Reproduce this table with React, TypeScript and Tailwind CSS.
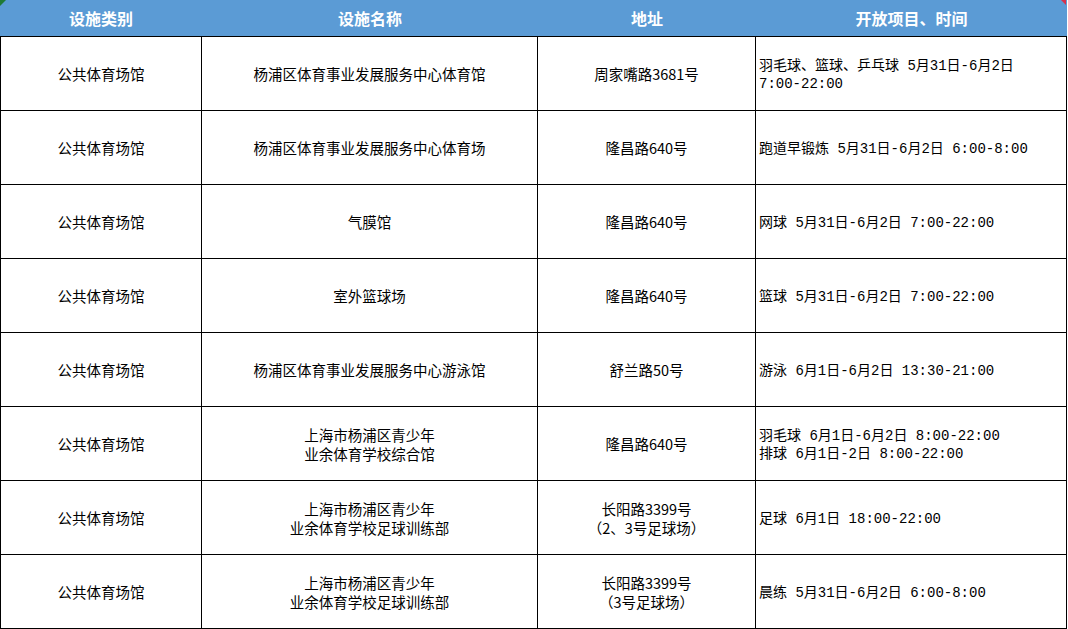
import React from "react";

type Row = { cat: string; name: string[]; addr: string[]; open: string[] };

const rows: Row[] = [
  { cat: "公共体育场馆", name: ["杨浦区体育事业发展服务中心体育馆"], addr: ["周家嘴路3681号"], open: ["羽毛球、篮球、乒乓球 5月31日-6月2日", "7:00-22:00"] },
  { cat: "公共体育场馆", name: ["杨浦区体育事业发展服务中心体育场"], addr: ["隆昌路640号"], open: ["跑道早锻炼 5月31日-6月2日 6:00-8:00"] },
  { cat: "公共体育场馆", name: ["气膜馆"], addr: ["隆昌路640号"], open: ["网球 5月31日-6月2日 7:00-22:00"] },
  { cat: "公共体育场馆", name: ["室外篮球场"], addr: ["隆昌路640号"], open: ["篮球 5月31日-6月2日 7:00-22:00"] },
  { cat: "公共体育场馆", name: ["杨浦区体育事业发展服务中心游泳馆"], addr: ["舒兰路50号"], open: ["游泳 6月1日-6月2日 13:30-21:00"] },
  { cat: "公共体育场馆", name: ["上海市杨浦区青少年", "业余体育学校综合馆"], addr: ["隆昌路640号"], open: ["羽毛球 6月1日-6月2日 8:00-22:00", "排球 6月1日-2日 8:00-22:00"] },
  { cat: "公共体育场馆", name: ["上海市杨浦区青少年", "业余体育学校足球训练部"], addr: ["长阳路3399号", "（2、3号足球场）"], open: ["足球 6月1日 18:00-22:00"] },
  { cat: "公共体育场馆", name: ["上海市杨浦区青少年", "业余体育学校足球训练部"], addr: ["长阳路3399号", "（3号足球场）"], open: ["晨练 5月31日-6月2日 6:00-8:00"] },
];

const font = { fontFamily: '"Noto Sans CJK SC", "Noto Sans", sans-serif' };
const mono = { fontFamily: '"Liberation Mono", "Noto Sans CJK SC", monospace' };

function Lines({ lines }: { lines: string[] }) {
  return (
    <>
      {lines.map((l, i) => (
        <div key={i} className="whitespace-pre">{l}</div>
      ))}
    </>
  );
}

export default function App() {
  return (
    <div className="relative w-[1068px] h-[629px] bg-white overflow-hidden" style={font}>
      <div className="absolute left-0 top-0 w-0 h-0 border-t-[6px] border-r-[6px] border-t-[#1f7a35] border-r-transparent" />
      <div className="absolute left-[1061px] top-0 w-0 h-0 border-t-[5px] border-l-[5px] border-t-[#d8304a] border-l-transparent" />
      <div className="w-[1067px]">
        <div className="flex h-[37px] bg-[#5b9bd5] border-b border-black text-white font-bold text-[16px]">
          <div className="w-[202px] flex items-center justify-center">设施类别</div>
          <div className="w-[336px] flex items-center justify-center">设施名称</div>
          <div className="w-[218px] flex items-center justify-center">地址</div>
          <div className="w-[311px] flex items-center justify-center">开放项目、时间</div>
        </div>
        {rows.map((r, i) => (
          <div key={i} className="flex h-[74px] border-b border-l border-black text-black text-[14.5px] leading-[19px]">
            <div className="w-[201px] border-r border-black flex flex-col items-center justify-center text-center">
              {r.cat}
            </div>
            <div className="w-[336px] border-r border-black flex flex-col items-center justify-center text-center">
              <Lines lines={r.name} />
            </div>
            <div className="w-[218px] border-r border-black flex flex-col items-center justify-center text-center">
              <Lines lines={r.addr} />
            </div>
            <div className="w-[311px] border-r border-black flex flex-col justify-center pl-[3px] pt-[2px] text-left text-[14px] leading-[18px]" style={mono}>
              <Lines lines={r.open} />
            </div>
          </div>
        ))}
      </div>
    </div>
  );
}
